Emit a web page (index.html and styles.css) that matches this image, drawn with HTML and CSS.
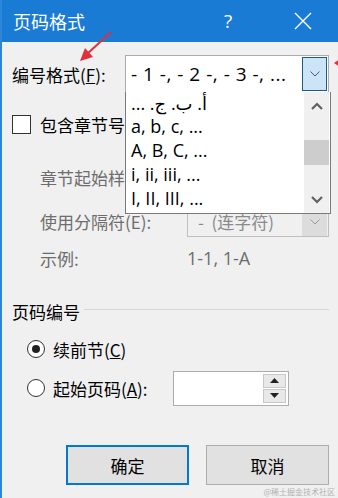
FILE: index.html
```html
<!DOCTYPE html>
<html lang="zh-CN">
<head>
  <meta charset="UTF-8" />
  <title>页码格式</title>
  <link rel="stylesheet" href="styles.css">
</head>
<body>
  <div class="dialog">
    <div class="titlebar">
      <span class="title">页码格式</span>
      <span class="help">?</span>
      <span class="close">
        <svg width="18" height="18" viewBox="0 0 18 18"><path d="M1 1 L17 17 M17 1 L1 17" stroke="#fff" stroke-width="1.4" fill="none"/></svg>
      </span>
    </div>

    <div class="content">
      <div class="row row-format">
        <span class="label">编号格式(<u>F</u>):</span>
        <div class="select">
          <span class="select-text">- 1 -, - 2 -, - 3 -, ...</span>
          <span class="drop-btn active">
            <svg width="10" height="6" viewBox="0 0 10 6"><path d="M0.5 0.5 L5 5 L9.5 0.5" stroke="#555" stroke-width="1" fill="none"/></svg>
          </span>
        </div>
      </div>

      <div class="row row-check">
        <span class="checkbox"></span>
        <span>包含章节号</span>
      </div>

      <div class="row row-style disabled">
        <span class="sub">章节起始样</span>
      </div>

      <div class="row row-sep disabled">
        <span class="sub sub-label">使用分隔符(E):</span>
        <div class="select select-off">
          <span class="select-text">-&nbsp;&nbsp;(连字符)</span>
          <span class="drop-btn">
            <svg width="10" height="6" viewBox="0 0 10 6"><path d="M0.5 0.5 L5 5 L9.5 0.5" stroke="#999" stroke-width="1" fill="none"/></svg>
          </span>
        </div>
      </div>

      <div class="row row-sample disabled">
        <span class="sub sub-label">示例:</span>
        <span class="sample">1-1, 1-A</span>
      </div>

      <div class="group-head">
        <span>页码编号</span>
        <span class="group-line"></span>
      </div>

      <div class="row row-radio1">
        <span class="radio on"></span>
        <span>续前节(<u>C</u>)</span>
      </div>

      <div class="row row-radio2">
        <span class="radio"></span>
        <span class="radio-label">起始页码(<u>A</u>):</span>
        <div class="spin">
          <div class="spin-btns">
            <span class="spin-btn"><svg width="9" height="5" viewBox="0 0 9 5"><path d="M0 5 L4.5 0 L9 5 Z" fill="#222"/></svg></span>
            <span class="spin-btn"><svg width="9" height="5" viewBox="0 0 9 5"><path d="M0 0 L4.5 5 L9 0 Z" fill="#222"/></svg></span>
          </div>
        </div>
      </div>

      <div class="buttons">
        <button class="btn primary">确定</button>
        <button class="btn">取消</button>
      </div>
    </div>

    <!-- open dropdown of the format select -->
    <div class="droplist">
      <ul class="items">
        <li><span dir="rtl">أ. ب. ج. ...</span></li>
        <li>a, b, c, ...</li>
        <li>A, B, C, ...</li>
        <li>i, ii, iii, ...</li>
        <li>I, II, III, ...</li>
      </ul>
      <div class="scrollbar">
        <svg class="arrow" width="12" height="8" viewBox="0 0 12 8"><path d="M1 7 L6 2 L11 7" stroke="#606060" stroke-width="2.2" fill="none"/></svg>
        <span class="thumb"></span>
        <svg class="arrow" width="12" height="8" viewBox="0 0 12 8"><path d="M1 1 L6 6 L11 1" stroke="#606060" stroke-width="2.2" fill="none"/></svg>
      </div>
    </div>

    <svg class="mark mark-left" width="40" height="34" viewBox="0 0 40 34">
      <path d="M34 2 L10 24" stroke="#e0303a" stroke-width="2" fill="none"/>
      <path d="M3 31 L8 18 L16 27 Z" fill="#e0303a"/>
    </svg>
    <svg class="mark mark-right" width="6" height="8" viewBox="0 0 6 8">
      <path d="M0 4 L6 0 L6 8 Z" fill="#e0303a"/>
    </svg>

    <span class="watermark">@稀土掘金技术社区</span>
  </div>
</body>
</html>
```

FILE: styles.css
```css
body {
  margin: 0;
  font-family: "Noto Sans", "Noto Sans CJK SC", sans-serif;
  font-size: 17px;
  color: #000;
}
.dialog {
  position: relative;
  width: 338px;
  height: 498px;
  background: #f0f0f0;
  border-left: 2px solid #2b86d8;
  box-sizing: border-box;
  overflow: hidden;
}
.titlebar {
  height: 42px;
  background: #1a7bd5;
  color: #fff;
  display: flex;
  align-items: center;
  margin-left: -2px;
  padding-left: 13px;
}
.title {
  font-family: "Noto Sans CJK SC", sans-serif;
  font-size: 18px;
  flex: 1;
}
.help {
  font-size: 19px;
  width: 70px;
  text-align: left;
  font-family: "Open Sans", sans-serif;
}
.close {
  width: 44px;
  display: flex;
  align-items: center;
}
.content {
  padding-left: 10px;
  padding-right: 9px;
  display: flex;
  flex-direction: column;
}
.row {
  display: flex;
  align-items: center;
}
.row-format {
  margin-top: 13px;
  height: 38px;
}
.label {
  width: 113px;
  font-family: "Noto Sans CJK SC", sans-serif;
}
.select {
  flex: 1;
  height: 38px;
  box-sizing: border-box;
  border: 1px solid #adadad;
  background: #fff;
  display: flex;
  align-items: center;
  padding-left: 5px;
  padding-right: 1px;
}
.select-text {
  flex: 1;
  font-size: 19px;
  font-family: "Open Sans", sans-serif;
  letter-spacing: 0.5px;
}
.drop-btn {
  width: 25px;
  height: 34px;
  box-sizing: border-box;
  display: flex;
  align-items: center;
  justify-content: center;
  background: #e1e1e1;
}
.drop-btn.active {
  background: #cce4f7;
  border: 1px solid #1f5c7a;
}
.row-check {
  margin-top: 15px;
  height: 32px;
  gap: 9px;
  font-family: "Noto Sans CJK SC", sans-serif;
}
.checkbox {
  width: 17px;
  height: 17px;
  border: 1px solid #333;
  background: #fff;
}
.disabled {
  color: #6d6d6d;
}
.sub {
  margin-left: 28px;
  font-family: "Noto Sans CJK SC", sans-serif;
}
.row-style {
  margin-top: 20px;
  height: 34px;
}
.row-sep {
  margin-top: 12px;
  height: 31px;
}
.sub-label {
  width: 147px;
}
.select-off {
  height: 31px;
  border-color: #bfbfbf;
  background: #f0f0f0;
  padding-left: 10px;
}
.select-off .select-text {
  font-family: "Noto Sans CJK SC", sans-serif;
  font-size: 17px;
  letter-spacing: 0;
  color: #8a8a8a;
}
.select-off .drop-btn {
  height: 29px;
  background: #dcdcdc;
}
.row-sample {
  margin-top: 8px;
  height: 26px;
}
.sample {
  font-family: "Open Sans", sans-serif;
  font-size: 18px;
}
.group-head {
  margin-top: 29px;
  height: 22px;
  display: flex;
  align-items: center;
  gap: 4px;
  font-family: "Noto Sans CJK SC", sans-serif;
}
.group-line {
  flex: 1;
  height: 1px;
  background: #d8d8d8;
  margin-top: -4px;
}
.row-radio1 {
  margin-top: 12px;
  height: 30px;
  padding-left: 15px;
  gap: 8px;
  font-family: "Noto Sans CJK SC", sans-serif;
}
.row-radio2 {
  margin-top: 6px;
  height: 36px;
  padding-left: 15px;
  gap: 8px;
  font-family: "Noto Sans CJK SC", sans-serif;
}
.radio {
  width: 16px;
  height: 16px;
  border: 1px solid #333;
  border-radius: 50%;
  background: #fff;
  position: relative;
}
.radio.on::after {
  content: "";
  position: absolute;
  left: 4px;
  top: 4px;
  width: 8px;
  height: 8px;
  border-radius: 50%;
  background: #222;
}
.radio-label {
  width: 112px;
}
.spin {
  width: 116px;
  height: 35px;
  box-sizing: border-box;
  border: 1px solid #adadad;
  background: #fff;
  display: flex;
  justify-content: flex-end;
  align-items: center;
  padding-right: 2px;
}
.spin-btns {
  display: flex;
  flex-direction: column;
  gap: 1px;
}
.spin-btn {
  width: 23px;
  height: 14px;
  box-sizing: border-box;
  border: 1px solid #c8c8c8;
  background: #e8e8e8;
  display: flex;
  align-items: center;
  justify-content: center;
}
.buttons {
  margin-top: 39px;
  display: flex;
  justify-content: flex-end;
  gap: 17px;
}
.btn {
  width: 123px;
  height: 40px;
  box-sizing: border-box;
  border: 1px solid #adadad;
  background: #e1e1e1;
  font-family: "Noto Sans CJK SC", sans-serif;
  font-size: 17px;
  color: #000;
  padding: 0;
}
.btn.primary {
  border: 2px solid #0078d7;
}
.droplist {
  position: absolute;
  left: 123px;
  top: 92px;
  width: 206px;
  height: 122px;
  box-sizing: border-box;
  border: 1px solid #7a7a7a;
  border-top: none;
  background: #fff;
  display: flex;
}
.items {
  list-style: none;
  margin: 0;
  padding: 0 0 0 5px;
  flex: 1;
  font-family: "Open Sans", "Noto Sans", "DejaVu Sans", sans-serif;
  font-size: 18px;
}
.items li {
  height: 24px;
  line-height: 24px;
  white-space: nowrap;
}
.items li:first-child {
  height: 22px;
  line-height: 22px;
}
.scrollbar {
  width: 25px;
  margin-right: 1px;
  background: #f0f0f0;
  display: flex;
  flex-direction: column;
  align-items: center;
}
.scrollbar .arrow {
  margin: 10px 0 7px;
}
.scrollbar .arrow:last-child {
  margin: 0;
  margin-top: auto;
  margin-bottom: 9px;
}
.thumb {
  width: 25px;
  height: 25px;
  background: #cdcdcd;
  margin-top: 23px;
}
.mark {
  position: absolute;
}
.mark-left {
  left: 75px;
  top: 30px;
}
.mark-right {
  left: 332px;
  top: 59px;
}
.watermark {
  position: absolute;
  right: 3px;
  bottom: 1px;
  font-family: "Noto Sans CJK SC", sans-serif;
  font-size: 8px;
  color: #b0b0b0;
}
```
